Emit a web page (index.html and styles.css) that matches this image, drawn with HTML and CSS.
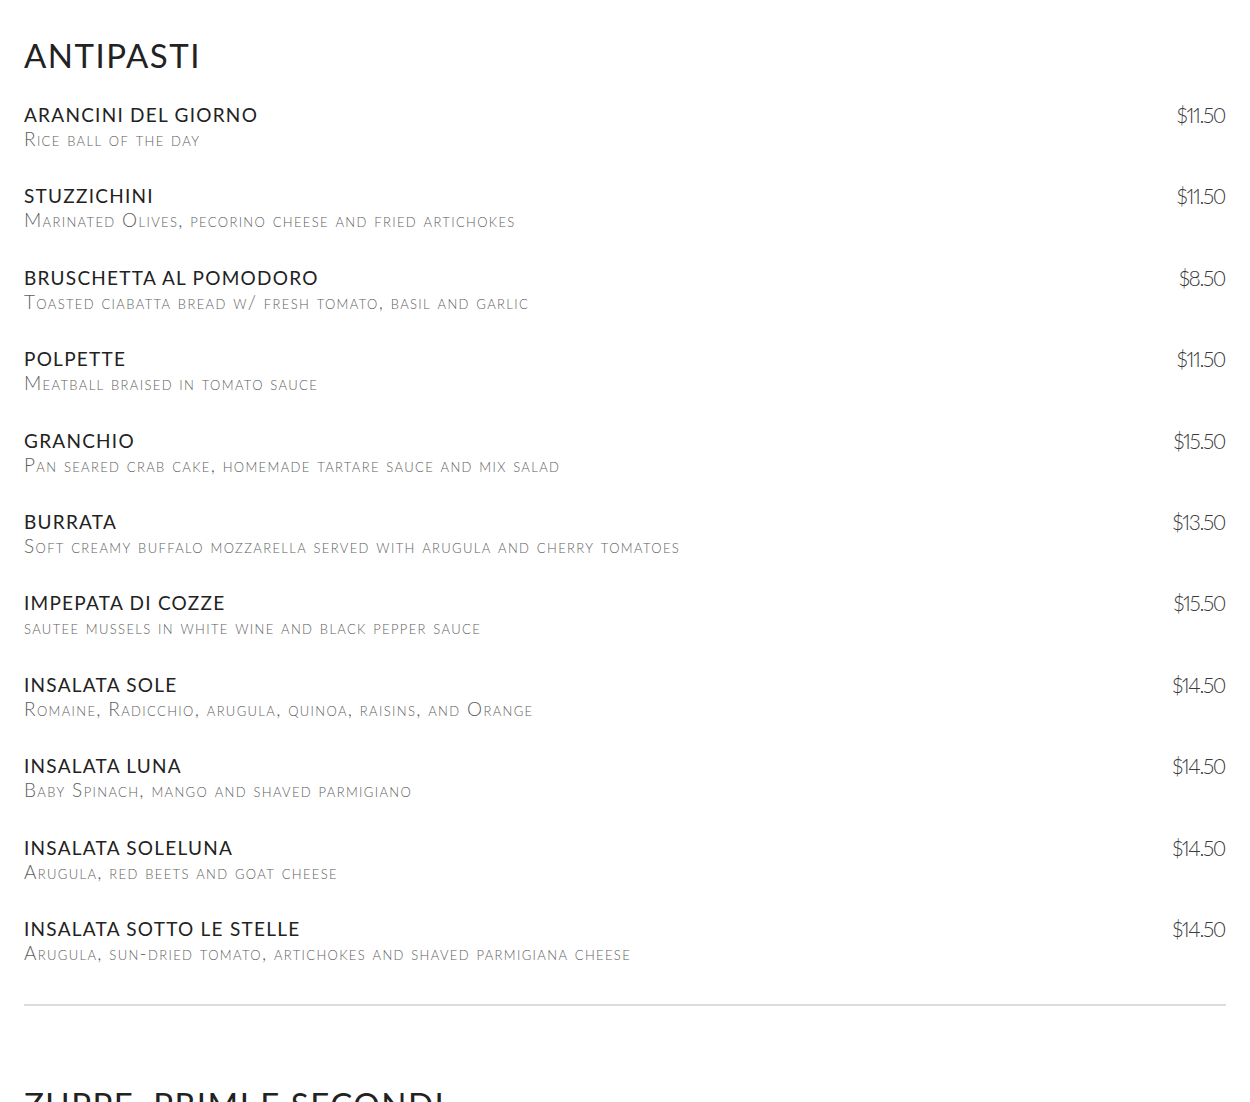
FILE: index.html
```html
<!DOCTYPE html>
<html lang="en">
<head>
<meta charset="utf-8">
<title>Menu</title>
<link rel="stylesheet" href="styles.css">
</head>
<body>
<main class="menu">
  <section class="section">
    <h2 class="section-title">Antipasti</h2>
    <ul class="items">
      <li class="item"><div class="item-text"><h3 class="item-name">Arancini del giorno</h3><p class="item-desc">Rice ball of the day</p></div><span class="item-price">$11.50</span></li>
      <li class="item"><div class="item-text"><h3 class="item-name">Stuzzichini</h3><p class="item-desc">Marinated Olives, pecorino cheese and fried artichokes</p></div><span class="item-price">$11.50</span></li>
      <li class="item"><div class="item-text"><h3 class="item-name">Bruschetta al pomodoro</h3><p class="item-desc">Toasted ciabatta bread w/ fresh tomato, basil and garlic</p></div><span class="item-price">$8.50</span></li>
      <li class="item"><div class="item-text"><h3 class="item-name">Polpette</h3><p class="item-desc">Meatball braised in tomato sauce</p></div><span class="item-price">$11.50</span></li>
      <li class="item"><div class="item-text"><h3 class="item-name">Granchio</h3><p class="item-desc">Pan seared crab cake, homemade tartare sauce and mix salad</p></div><span class="item-price">$15.50</span></li>
      <li class="item"><div class="item-text"><h3 class="item-name">Burrata</h3><p class="item-desc">Soft creamy buffalo mozzarella served with arugula and cherry tomatoes</p></div><span class="item-price">$13.50</span></li>
      <li class="item"><div class="item-text"><h3 class="item-name">Impepata di cozze</h3><p class="item-desc">sautee mussels in white wine and black pepper sauce</p></div><span class="item-price">$15.50</span></li>
      <li class="item"><div class="item-text"><h3 class="item-name">Insalata Sole</h3><p class="item-desc">Romaine, Radicchio, arugula, quinoa, raisins, and Orange</p></div><span class="item-price">$14.50</span></li>
      <li class="item"><div class="item-text"><h3 class="item-name">Insalata Luna</h3><p class="item-desc">Baby Spinach, mango and shaved parmigiano</p></div><span class="item-price">$14.50</span></li>
      <li class="item"><div class="item-text"><h3 class="item-name">Insalata Soleluna</h3><p class="item-desc">Arugula, red beets and goat cheese</p></div><span class="item-price">$14.50</span></li>
      <li class="item"><div class="item-text"><h3 class="item-name">Insalata Sotto le Stelle</h3><p class="item-desc">Arugula, sun-dried tomato, artichokes and shaved parmigiana cheese</p></div><span class="item-price">$14.50</span></li>
    </ul>
  </section>
  <hr class="divider">
  <section class="section">
    <h2 class="section-title">Zuppe, Primi e Secondi</h2>
  </section>
</main>
</body>
</html>
```

FILE: styles.css
```css
html, body {
  margin: 0;
  padding: 0;
  background: #ffffff;
}
body {
  font-family: "Lato", "Liberation Sans", sans-serif;
  color: #222;
}
.menu {
  padding: 0 24px;
}
.section-title {
  margin: 0;
  padding-top: 37px;
  font-family: "Lato", "Liberation Sans", sans-serif;
  font-weight: 400;
  font-size: 33px;
  line-height: 36px;
  letter-spacing: 1.5px;
  text-transform: uppercase;
  color: #222;
}
.items {
  list-style: none;
  margin: 30px 0 0;
  padding: 0;
}
.item {
  display: flex;
  justify-content: space-between;
  align-items: flex-start;
  height: 81.4px;
}
.item-name {
  margin: 0;
  font-weight: 400;
  font-size: 19px;
  line-height: 24px;
  letter-spacing: 1.25px;
  text-transform: uppercase;
  color: #222;
}
.item-desc {
  margin: 0;
  font-weight: 300;
  font-size: 19px;
  line-height: 24px;
  font-variant: small-caps;
  letter-spacing: 1.35px;
  color: #5e5e5e;
}
.item-price {
  font-family: "Lato", "Open Sans", sans-serif;
  font-weight: 300;
  font-size: 21px;
  line-height: 24px;
  font-variant-numeric: proportional-nums;
  letter-spacing: -1.4px;
  padding-right: 1px;
  color: #3a3a3a;
}
.divider {
  margin: 6px 0 0;
  border: 0;
  height: 2px;
  background: #dcdcdc;
}
.divider + .section .section-title {
  padding-top: 80px;
}
```
